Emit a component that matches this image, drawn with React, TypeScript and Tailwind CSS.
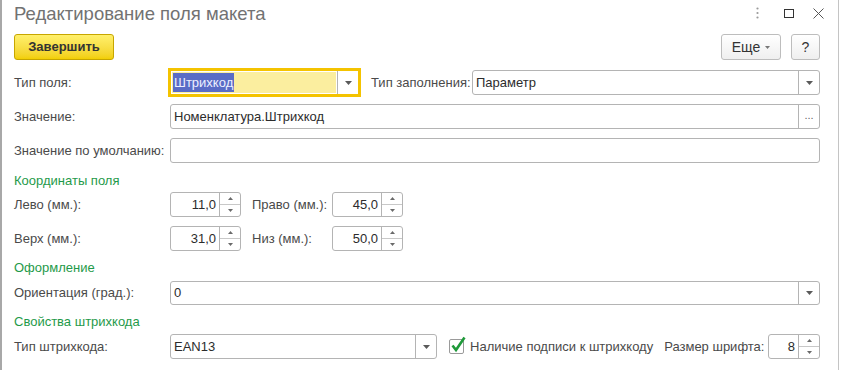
import type { ReactNode } from "react";

const font = { fontFamily: '"Liberation Sans", Arial, sans-serif' };

const Arrow = () => (
  <svg width="7" height="4" viewBox="0 0 7 4">
    <path d="M0 0h7L3.5 4z" fill="#5a5a5a" />
  </svg>
);

const Label = ({ children, w }: { children: ReactNode; w: string }) => (
  <div className={`${w} shrink-0 text-[13px] text-[#4a4a4a] whitespace-nowrap`}>{children}</div>
);

const Heading = ({ children, cls }: { children: ReactNode; cls: string }) => (
  <div className={`${cls} h-[20px] flex items-center text-[13px] text-[#1f9a4a]`}>{children}</div>
);

const Combo = ({ value, w, tail }: { value?: string; w: string; tail?: ReactNode }) => (
  <div className={`${w} h-full flex border border-[#b4b4b4] rounded-[3px] bg-white`}>
    <div className="flex-1 flex items-center pl-[3px] text-[13px] text-[#2c2c2c]">{value}</div>
    {tail !== undefined && (
      <div className="w-[21px] border-l border-[#b4b4b4] flex items-center justify-center">{tail}</div>
    )}
  </div>
);

const Spin = ({ value, w }: { value: string; w: string }) => (
  <div className={`${w} h-full flex border border-[#b4b4b4] rounded-[3px] bg-white`}>
    <div className="flex-1 flex items-center justify-end pr-[3px] text-[13px] text-[#2c2c2c]">{value}</div>
    <div className="w-[21px] border-l border-[#b4b4b4] flex flex-col">
      <div className="flex-1 flex items-center justify-center border-b border-[#c8c8c8]">
        <svg width="5" height="3" viewBox="0 0 5 3">
          <path d="M0 3h5L2.5 0z" fill="#6a6a6a" />
        </svg>
      </div>
      <div className="flex-1 flex items-center justify-center">
        <svg width="5" height="3" viewBox="0 0 5 3">
          <path d="M0 0h5L2.5 3z" fill="#6a6a6a" />
        </svg>
      </div>
    </div>
  </div>
);

export default function App() {
  return (
    <div className="w-[841px] h-[370px] flex bg-white overflow-hidden" style={font}>
      <div className="w-[2px] bg-[#a8a8a8] shrink-0" />
      <div className="w-[836px] shrink-0 pl-[12px] pr-[18px] flex flex-col">
        {/* title bar */}
        <div className="h-[34px] flex items-start pt-[1px]">
          <div className="flex-1 text-[18.5px] leading-[26px] text-[#727272]">Редактирование поля макета</div>
          <div className="flex items-center h-[24px] mr-[-4px]">
            <svg width="3" height="12" viewBox="0 0 3 12" className="mr-[25px]">
              <circle cx="1.5" cy="1.5" r="1.1" fill="#9a9a9a" />
              <circle cx="1.5" cy="6" r="1.1" fill="#9a9a9a" />
              <circle cx="1.5" cy="10.5" r="1.1" fill="#9a9a9a" />
            </svg>
            <div className="w-[10px] h-[9px] border border-[#333] mr-[19px]" />
            <svg width="11" height="11" viewBox="0 0 11 11">
              <path d="M0.5 0.5l10 10M10.5 0.5l-10 10" stroke="#555" strokeWidth="1" />
            </svg>
          </div>
        </div>

        {/* command bar */}
        <div className="h-[26px] flex">
          <button className="w-[100px] h-full rounded-[3px] border border-[#c7a600] bg-gradient-to-b from-[#fff06a] to-[#f2cf00] text-[13px] font-bold text-[#333]">
            Завершить
          </button>
          <div className="flex-1" />
          <button className="w-[60px] h-full rounded-[3px] border border-[#bdbdbd] bg-gradient-to-b from-white to-[#efefef] text-[14px] text-[#333] flex items-center justify-center gap-[5px]">
            Еще
            <svg width="5" height="3" viewBox="0 0 5 3">
              <path d="M0 0h5L2.5 3z" fill="#777" />
            </svg>
          </button>
          <button className="w-[29px] h-full ml-[10px] rounded-[3px] border border-[#bdbdbd] bg-gradient-to-b from-white to-[#efefef] text-[14px] text-[#333]">
            ?
          </button>
        </div>

        {/* Тип поля */}
        <div className="mt-[10px] h-[25px] flex items-center">
          <Label w="w-[156px]">Тип поля:</Label>
          <div className="w-[189px] h-full flex border border-[#f4c300] shadow-[0_0_0_2px_#f4c300] bg-white">
            <div className="flex-1 flex items-center bg-[#fbee9f] m-[1px] pl-[1px]">
              <span className="bg-[#5a6cc6] text-[#eef0ff] text-[13px] leading-[19px] px-[1px]">Штрихкод</span>
            </div>
            <div className="w-[21px] border-l border-[#b4b4b4] flex items-center justify-center">
              <Arrow />
            </div>
          </div>
          <div className="ml-[12px]">
            <Label w="w-[101px]">Тип заполнения:</Label>
          </div>
          <Combo w="w-[348px]" value="Параметр" tail={<Arrow />} />
        </div>

        {/* Значение */}
        <div className="mt-[9px] h-[25px] flex items-center">
          <Label w="w-[156px]">Значение:</Label>
          <Combo
            w="w-[650px]"
            value="Номенклатура.Штрихкод"
            tail={<span className="text-[11px] text-[#666] leading-none pb-[2px]">...</span>}
          />
        </div>

        {/* Значение по умолчанию */}
        <div className="mt-[9px] h-[25px] flex items-center">
          <Label w="w-[156px]">Значение по умолчанию:</Label>
          <Combo w="w-[650px]" value="" />
        </div>

        <Heading cls="mt-[8px]">Координаты поля</Heading>

        <div className="mt-[1px] h-[25px] flex items-center">
          <Label w="w-[156px]">Лево (мм.):</Label>
          <Spin w="w-[71px]" value="11,0" />
          <div className="ml-[11px]">
            <Label w="w-[80px]">Право (мм.):</Label>
          </div>
          <Spin w="w-[71px]" value="45,0" />
        </div>

        <div className="mt-[9px] h-[25px] flex items-center">
          <Label w="w-[156px]">Верх (мм.):</Label>
          <Spin w="w-[71px]" value="31,0" />
          <div className="ml-[11px]">
            <Label w="w-[80px]">Низ (мм.):</Label>
          </div>
          <Spin w="w-[71px]" value="50,0" />
        </div>

        <Heading cls="mt-[7px]">Оформление</Heading>

        <div className="mt-[3px] h-[24px] flex items-center">
          <Label w="w-[156px]">Ориентация (град.):</Label>
          <Combo w="w-[650px]" value="0" tail={<Arrow />} />
        </div>

        <Heading cls="mt-[7px]">Свойства штрихкода</Heading>

        <div className="mt-[2px] h-[25px] flex items-center">
          <Label w="w-[156px]">Тип штрихкода:</Label>
          <Combo w="w-[268px]" value="EAN13" tail={<Arrow />} />
          <div className="relative ml-[12px] w-[15px] h-[15px] border border-[#9a9a9a] rounded-[2px] bg-white">
            <svg width="16" height="17" viewBox="0 0 16 17" className="absolute left-[1px] top-[-4px]">
              <path d="M1.5 9.5l3.5 4.5L13.5 1.5" fill="none" stroke="#1f9a3a" strokeWidth="2.6" />
            </svg>
          </div>
          <div className="ml-[6px] text-[13px] text-[#4a4a4a] whitespace-nowrap">Наличие подписи к штрихкоду</div>
          <div className="ml-[11px]">
            <Label w="w-[104px]">Размер шрифта:</Label>
          </div>
          <Spin w="w-[52px]" value="8" />
        </div>
      </div>
      <div className="w-[1px] bg-[#c4c4c4] shrink-0" />
    </div>
  );
}
